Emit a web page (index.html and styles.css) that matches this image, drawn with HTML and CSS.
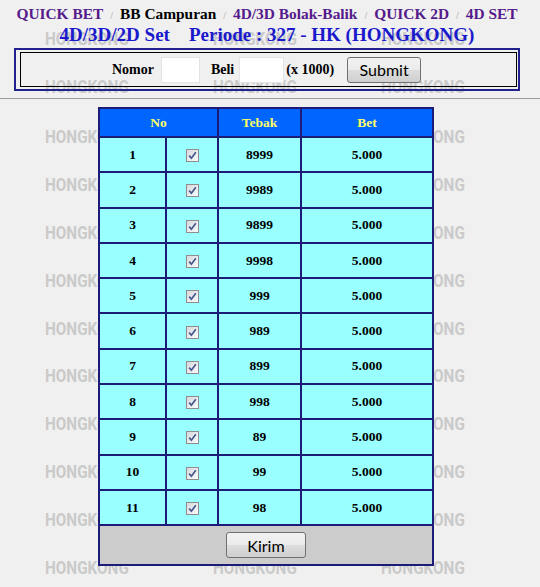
FILE: index.html
```html
<!DOCTYPE html>
<html>
<head>
<meta charset="utf-8">
<title>4D/3D/2D Set</title>
<link rel="stylesheet" href="styles.css">
</head>
<body>
<div class="page">
  <div class="top">
    <div class="wm wm-top">
      <span>HONGKONG</span><span>HONGKONG</span><span>HONGKONG</span>
      <span>HONGKONG</span><span>HONGKONG</span><span>HONGKONG</span>
    </div>
    <div class="top-content">
      <div class="nav">
        <a class="navlink" href="#">QUICK BET</a><span class="sep">/</span><span class="cur">BB Campuran</span><span class="sep">/</span><a class="navlink" href="#">4D/3D Bolak-Balik</a><span class="sep">/</span><a class="navlink" href="#">QUICK 2D</a><span class="sep">/</span><a class="navlink" href="#">4D SET</a>
      </div>
      <div class="title">4D/3D/2D Set&nbsp;&nbsp;&nbsp; Periode : 327 - HK (HONGKONG)</div>
      <div class="formbox">
        <div class="forminner">
          <span class="lbl">Nomor</span>
          <input class="field f-nomor" type="text">
          <span class="lbl lbl-beli">Beli</span>
          <input class="field f-beli" type="text">
          <span class="lbl lbl-x">(x 1000)</span>
          <button class="btn btn-submit" type="button">Submit</button>
        </div>
      </div>
    </div>
  </div>
  <div class="lower">
    <div class="wm wm-low">
      <span>HONGKONG</span><i class="gap"></i><span>HONGKONG</span>
      <span>HONGKONG</span><i class="gap"></i><span>HONGKONG</span>
      <span>HONGKONG</span><i class="gap"></i><span>HONGKONG</span>
      <span>HONGKONG</span><i class="gap"></i><span>HONGKONG</span>
      <span>HONGKONG</span><i class="gap"></i><span>HONGKONG</span>
      <span>HONGKONG</span><i class="gap"></i><span>HONGKONG</span>
      <span>HONGKONG</span><i class="gap"></i><span>HONGKONG</span>
      <span>HONGKONG</span><i class="gap"></i><span>HONGKONG</span>
      <span>HONGKONG</span><i class="gap"></i><span>HONGKONG</span>
      <span>HONGKONG</span><span>HONGKONG</span><span>HONGKONG</span>
    </div>
    <div class="wrap">
      <table class="bets">
        <colgroup>
          <col class="c1"><col class="c2"><col class="c3"><col class="c4">
        </colgroup>
        <thead>
          <tr><th colspan="2">No</th><th>Tebak</th><th>Bet</th></tr>
        </thead>
        <tbody>
          <tr><td>1</td><td><span class="cb"><svg width="11" height="11" viewBox="0 0 11 11"><path d="M2.2 5.6 L4.4 8.2 L8.8 2.2" /></svg></span></td><td>8999</td><td>5.000</td></tr>
          <tr><td>2</td><td><span class="cb"><svg width="11" height="11" viewBox="0 0 11 11"><path d="M2.2 5.6 L4.4 8.2 L8.8 2.2" /></svg></span></td><td>9989</td><td>5.000</td></tr>
          <tr><td>3</td><td><span class="cb"><svg width="11" height="11" viewBox="0 0 11 11"><path d="M2.2 5.6 L4.4 8.2 L8.8 2.2" /></svg></span></td><td>9899</td><td>5.000</td></tr>
          <tr><td>4</td><td><span class="cb"><svg width="11" height="11" viewBox="0 0 11 11"><path d="M2.2 5.6 L4.4 8.2 L8.8 2.2" /></svg></span></td><td>9998</td><td>5.000</td></tr>
          <tr><td>5</td><td><span class="cb"><svg width="11" height="11" viewBox="0 0 11 11"><path d="M2.2 5.6 L4.4 8.2 L8.8 2.2" /></svg></span></td><td>999</td><td>5.000</td></tr>
          <tr><td>6</td><td><span class="cb"><svg width="11" height="11" viewBox="0 0 11 11"><path d="M2.2 5.6 L4.4 8.2 L8.8 2.2" /></svg></span></td><td>989</td><td>5.000</td></tr>
          <tr><td>7</td><td><span class="cb"><svg width="11" height="11" viewBox="0 0 11 11"><path d="M2.2 5.6 L4.4 8.2 L8.8 2.2" /></svg></span></td><td>899</td><td>5.000</td></tr>
          <tr><td>8</td><td><span class="cb"><svg width="11" height="11" viewBox="0 0 11 11"><path d="M2.2 5.6 L4.4 8.2 L8.8 2.2" /></svg></span></td><td>998</td><td>5.000</td></tr>
          <tr><td>9</td><td><span class="cb"><svg width="11" height="11" viewBox="0 0 11 11"><path d="M2.2 5.6 L4.4 8.2 L8.8 2.2" /></svg></span></td><td>89</td><td>5.000</td></tr>
          <tr><td>10</td><td><span class="cb"><svg width="11" height="11" viewBox="0 0 11 11"><path d="M2.2 5.6 L4.4 8.2 L8.8 2.2" /></svg></span></td><td>99</td><td>5.000</td></tr>
          <tr><td>11</td><td><span class="cb"><svg width="11" height="11" viewBox="0 0 11 11"><path d="M2.2 5.6 L4.4 8.2 L8.8 2.2" /></svg></span></td><td>98</td><td>5.000</td></tr>
          <tr class="kirim-row"><td colspan="4"><button class="btn btn-kirim" type="button">Kirim</button></td></tr>
        </tbody>
      </table>
    </div>
  </div>
</div>
</body>
</html>
```

FILE: styles.css
```css
html, body {
  margin: 0;
  padding: 0;
}
body {
  background: #f0f0f0;
  font-family: "Liberation Serif", "Times New Roman", serif;
  color: #000;
}
.page {
  width: 540px;
  min-height: 587px;
  overflow: hidden;
}

/* watermark layers */
.wm {
  position: absolute;
  left: 0;
  top: 0;
  width: 540px;
  display: grid;
  grid-template-columns: repeat(3, 168px);
  padding-left: 45px;
  box-sizing: border-box;
  overflow: hidden;
  z-index: 0;
  pointer-events: none;
}
.wm span {
  display: block;
  font-family: Roboto, "DejaVu Sans", sans-serif;
  font-weight: 700;
  font-size: 18px;
  line-height: 20px;
  height: 20px;
  color: #cacaca;
  white-space: nowrap;
  transform: scaleX(0.85);
  transform-origin: left center;
}
.wm .gap {
  display: block;
  height: 20px;
}
.wm-top {
  height: 98px;
  padding-top: 29px;
  grid-auto-rows: 48px;
}
.wm-low {
  height: 488px;
  padding-top: 28px;
  grid-auto-rows: 47.9px;
}

/* top section */
.top {
  position: relative;
  width: 540px;
  height: 98px;
}
.top-content {
  position: relative;
  z-index: 1;
  width: 534px;
}
.nav {
  text-align: center;
  padding-top: 5px;
  height: 18px;
  font-size: 15.4px;
  line-height: 18px;
  font-weight: bold;
  white-space: nowrap;
}
.navlink {
  color: #551a8b;
  text-decoration: none;
}
.nav .cur {
  color: #000;
}
.nav .sep {
  color: #9a9a9a;
  font-size: 10px;
  line-height: 0;
  font-weight: normal;
  margin: 0 7px;
}
.title {
  text-align: center;
  margin-top: 1px;
  height: 22px;
  font-size: 19px;
  line-height: 22px;
  font-weight: bold;
  color: #1a1acc;
  white-space: nowrap;
}
.formbox {
  margin: 2px 14px 0;
  border: 2px solid #22228c;
  padding: 2px 1px 2px 4px;
}
.forminner {
  border: 1px solid #000;
  height: 33px;
  display: flex;
  align-items: center;
  justify-content: center;
  padding-right: 4px;
  font-size: 14px;
  font-weight: bold;
}
.field {
  height: 26px;
  box-sizing: border-box;
  border: 1px solid #e4e4e4;
  background: #fff;
  padding: 0;
  margin: 0;
}
.f-nomor {
  width: 39px;
  margin-left: 7px;
}
.f-beli {
  width: 45px;
  margin-left: 5px;
}
.lbl-beli {
  margin-left: 11px;
}
.lbl-x {
  margin-left: 2px;
}
.btn {
  height: 26px;
  box-sizing: border-box;
  border: 1px solid #707070;
  border-radius: 3px;
  background: linear-gradient(#f2f2f2 0%, #ebebeb 50%, #dddddd 51%, #cfcfcf 100%);
  font-family: Lato, "Open Sans", sans-serif;
  font-size: 16px;
  color: #000;
  padding: 0;
  margin: 0;
}
.btn-submit {
  width: 74px;
  margin-left: 13px;
}
.btn-kirim {
  width: 80px;
}

/* lower section */
.lower {
  position: relative;
  border-top: 1px solid #9c9c9c;
  height: 489px;
  box-sizing: border-box;
}
.wrap {
  position: relative;
  z-index: 1;
  width: 532px;
  padding-top: 8px;
}
.bets {
  margin: 0 auto;
  width: 336px;
  table-layout: fixed;
  border-collapse: separate;
  border-spacing: 0;
  border: 1px solid #1c1c78;
  font-size: 13.5px;
  font-weight: bold;
  text-align: center;
}
.c1 { width: 67px; }
.c2 { width: 52px; }
.c3 { width: 83px; }
.c4 { width: 132px; }
.bets th,
.bets td {
  border: 1px solid #1c1c78;
  padding: 0;
  vertical-align: middle;
}
.bets th {
  background: #0066ff;
  color: #ffff66;
  height: 27px;
}
.bets td {
  background: #99ffff;
  height: 33.3px;
}
.bets .kirim-row td {
  background: #cccccc;
  height: 38px;
}
.cb {
  display: inline-block;
  width: 13px;
  height: 13px;
  box-sizing: border-box;
  border: 1px solid #8e8e8e;
  background: linear-gradient(135deg, #d6d8dc 0%, #eceef0 60%, #fafafa 100%);
  vertical-align: middle;
}
.cb svg {
  display: block;
}
.cb path {
  fill: none;
  stroke: #46578c;
  stroke-width: 1.7;
}
```
